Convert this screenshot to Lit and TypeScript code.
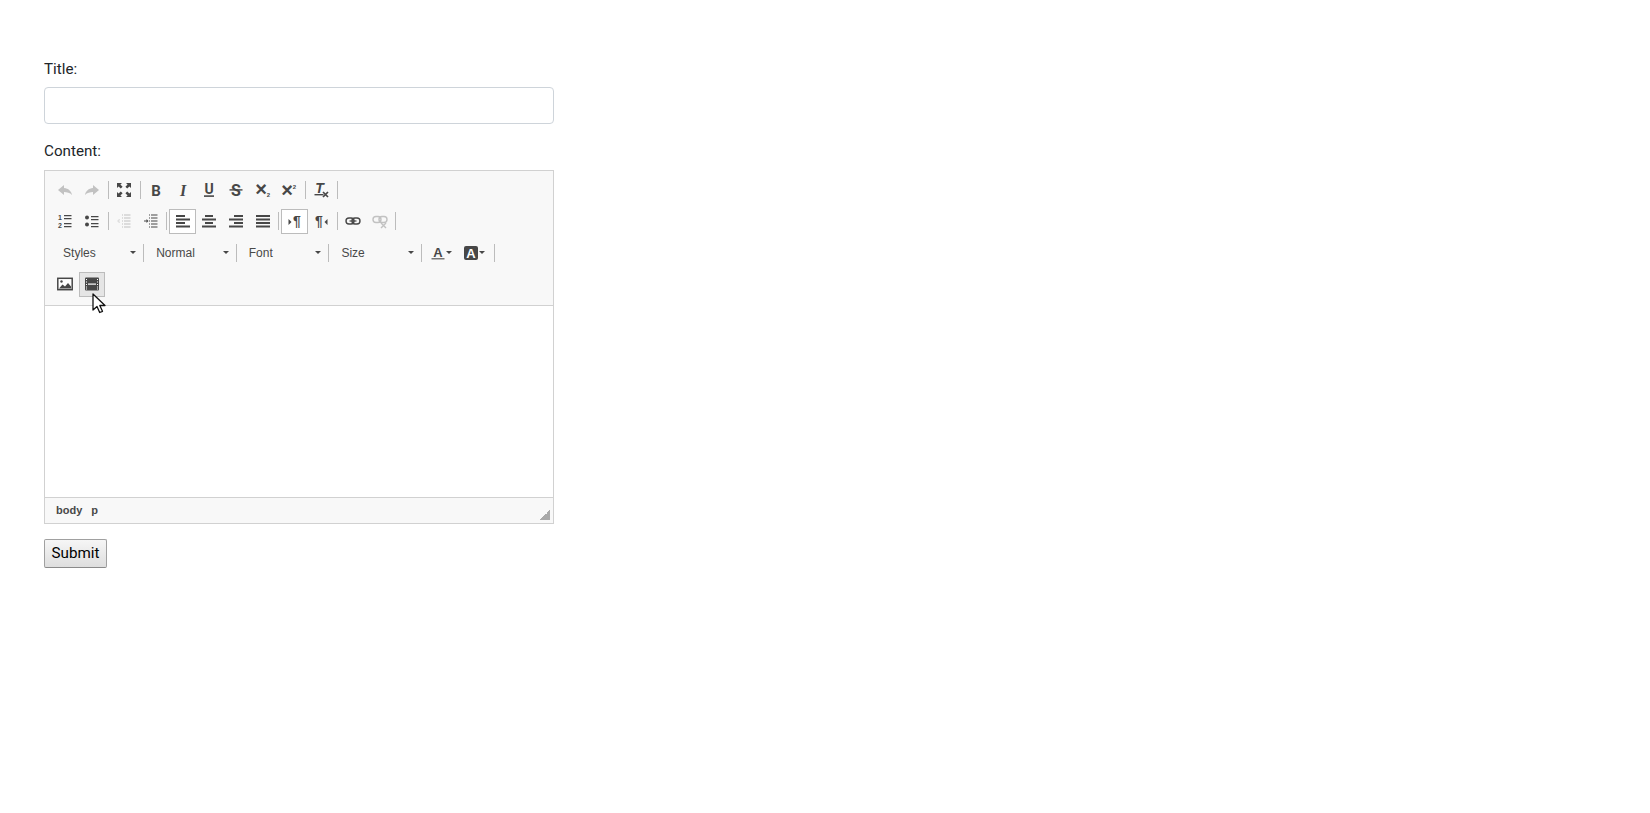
import { LitElement, html, css, svg, TemplateResult } from "lit";
import { customElement } from "lit/decorators.js";

const label = (t: string, size: number, family: string, x: number, y: number, style = "") =>
  svg`<text x=${x} y=${y} font-size=${size} font-family=${family} font-weight="bold" font-style=${style || "normal"} text-anchor="middle">${t}</text>`;
const SANS = "Liberation Sans, sans-serif";
const SERIF = "Liberation Serif, serif";
const DOTS = svg`<path d="M6 1.500h1v1H6zM6 4.500h1v1H6zM6 7.500h1v1H6zM6 10.500h1v1H6zM6 13.500h1v1H6z"/>`;
const LINES = svg`<path d="M8 1.500h6.500v1.100H8zM8 4.500h6.500v1.100H8zM8 7.500h6.500v1.100H8zM8 10.500h6.500v1.100H8zM8 13.500h6.500v1.100H8z"/>`;

const ICONS: Record<string, TemplateResult> = {
  undo: svg`<path d="M7 3 1 8l6 5v-3c3 0 6 .8 8 3-.7-4-3.500-6.600-8-7z"/>`,
  redo: svg`<path d="M9 3l6 5-6 5v-3c-3 0-6 .8-8 3 .7-4 3.500-6.600 8-7z"/>`,
  maximize: svg`<path d="M1 1h5L4.400 2.600 6.600 4.800 4.800 6.600 2.600 4.400 1 6zM15 1v5l-1.600-1.600-2.200 2.200-1.800-1.800 2.200-2.200L10 1zM1 15v-5l1.600 1.600 2.200-2.200 1.800 1.800-2.200 2.200L6 15zM15 15h-5l1.600-1.600-2.200-2.200 1.800-1.800 2.200 2.200L15 10z"/>`,
  bold: svg`${label("B", 15, "Roboto, sans-serif", 8, 13.500)}`,
  italic: svg`${label("I", 16, SERIF, 8, 13.500, "italic")}`,
  underline: svg`${label("U", 14, "Roboto, sans-serif", 8, 12)}<rect x="3" y="13.300" width="10" height="1.600"/>`,
  strike: svg`${label("S", 16, "Roboto, sans-serif", 8, 13.800)}<rect x="1.500" y="7.200" width="13" height="1.400"/>`,
  sub: svg`${label("×", 20, SANS, 6, 13.500)}${label("2", 6, SANS, 13.500, 14.500)}`,
  sup: svg`${label("×", 20, SANS, 6, 15)}${label("2", 6, SANS, 13.500, 6.500)}`,
  clear: svg`${label("T", 14, SANS, 6.500, 10.500, "italic")}<rect x="1.500" y="12" width="9" height="1.400"/><path d="M10 10l5 5M15 10l-5 5" stroke="#474747" stroke-width="1.700" fill="none"/>`,
  ol: svg`${label("1", 7, SANS, 3, 7)}${label("2", 7, SANS, 3, 14.500)}<path d="M7 2h7.500v1.300H7zM7 5h7.500v1.300H7zM7 10h7.500v1.300H7zM7 13h7.500v1.300H7z"/>`,
  ul: svg`<circle cx="3" cy="4.500" r="2"/><circle cx="3" cy="11.500" r="2"/><path d="M7 3h7.500v1.300H7zM7 6h7.500v1.300H7zM7 10h7.500v1.300H7zM7 13h7.500v1.300H7z"/>`,
  outdent: svg`${LINES}${DOTS}<path d="M1 7.400h2.500V6l-2.500 2 2.500 2V8.600H1z"/>`,
  indent: svg`${LINES}${DOTS}<path d="M1 7.400h2.500V6l2 2-2 2V8.600H1z"/>`,
  left: svg`<path d="M1 2h9v2H1zM1 5.500h14v2H1zM1 9h9v2H1zM1 12.500h14v2H1z"/>`,
  center: svg`<path d="M4 2h8v2H4zM1 5.500h14v2H1zM4 9h8v2H4zM1 12.500h14v2H1z"/>`,
  right: svg`<path d="M6 2h9v2H6zM1 5.500h14v2H1zM6 9h9v2H6zM1 12.500h14v2H1z"/>`,
  justify: svg`<path d="M1 2h14v2H1zM1 5.500h14v2H1zM1 9h14v2H1zM1 12.500h14v2H1z"/>`,
  ltr: svg`<path d="M1.500 6l3 3-3 3z"/>${label("¶", 14, SANS, 10, 13)}`,
  rtl: svg`${label("¶", 14, SANS, 6, 13)}<path d="M14.500 6l-3 3 3 3z"/>`,
  link: svg`<g fill="none" stroke="#474747" stroke-width="1.400"><rect x="1" y="5" width="8" height="6" rx="3"/><rect x="7" y="5" width="8" height="6" rx="3"/></g><rect x="4.500" y="7.400" width="7" height="1.200"/>`,
  unlink: svg`<g fill="none" stroke="#474747" stroke-width="1.400"><rect x="1" y="3.500" width="8" height="6" rx="3"/><rect x="7" y="3.500" width="8" height="6" rx="3"/><path d="M9 10l5 5M14 10l-5 5"/></g>`,
  color: svg`${label("A", 13, SANS, 8, 11.500)}<rect x="1.500" y="13" width="13" height="1.500" fill="#777"/>`,
  bg: svg`<rect x="1" y="1" width="14" height="14" rx="2"/><text x="8" y="13" font-size="13" font-family=${SANS} font-weight="bold" text-anchor="middle" fill="#fff">A</text>`,
  image: svg`<rect x=".8" y="2.300" width="14.400" height="11.400" fill="#fff" stroke="#474747" stroke-width="1.500"/><path d="M2 12.500l3.500-4 2.500 2 3-3.500 3 3.500v2z"/><circle cx="4.500" cy="5.500" r="1.200"/>`,
  media: svg`<rect x="1" y="1.500" width="14" height="13" rx="1"/><path d="M4 7.500h8v1.200H4z" fill="#fff"/><path d="M2 3h1v1H2zM2 5.500h1v1H2zM2 8h1v1H2zM2 10.500h1v1H2zM2 12.500h1v1H2zM13 3h1v1h-1zM13 5.500h1v1h-1zM13 8h1v1h-1zM13 10.500h1v1h-1zM13 12.500h1v1h-1z" fill="#fff"/>`,
};

type Item = string | { combo: string } | { drop: string };

const ROWS: Item[][] = [
  ["undo:off", "redo:off", "|", "maximize", "|", "bold", "italic", "underline", "strike", "sub", "sup", "|", "clear", "|"],
  ["ol", "ul", "|", "outdent:off", "indent", "|", "left:on", "center", "right", "justify", "|", "ltr:on", "rtl", "|", "link", "unlink:off", "|"],
  [{ combo: "Styles" }, "|", { combo: "Normal" }, "|", { combo: "Font" }, "|", { combo: "Size" }, "|", { drop: "color" }, { drop: "bg" }, "|"],
  ["image", "media:hover"],
];

@customElement("app-root")
export class AppRoot extends LitElement {
  static styles = css`
    :host { display: block; font-family: Roboto, sans-serif; color: #212529; }
    .form { width: 510px; margin-left: 44px; padding-top: 58.300px; position: relative; }
    .lbl { display: block; font-size: 15.200px; line-height: 22.800px; margin-bottom: 6.200px; }
    .input { box-sizing: border-box; display: block; width: 100%; height: 36.500px; border: 1px solid #ced4da; border-radius: 4px; background: #fff; margin-bottom: 16.500px; }
    .editor { box-sizing: border-box; height: 354px; margin-top: 6.900px; border: 1px solid #d1d1d1; display: flex; flex-direction: column; margin-bottom: 15px; }
    .toolbar { background: #f8f8f8; border-bottom: 1px solid #d1d1d1; padding: 3px 7.100px 5px; }
    .row { display: flex; align-items: center; height: 31.500px; }
    .btn { box-sizing: border-box; width: 26.670px; height: 25px; display: flex; align-items: center; justify-content: center; border: 1px solid transparent; }
    .btn svg { width: 16px; height: 16px; fill: #474747; display: block; overflow: visible; }
    .off svg { opacity: .3; }
    .on { background: #fff; border-color: #bcbcbc; }
    .hover { background: #e5e5e5; border-color: #bcbcbc; }
    .sep { width: 5.330px; height: 18px; display: flex; justify-content: center; flex: none; }
    .sep::before { content: ""; width: 1px; background: #bcbcbc; }
    .combo + .sep { width: 3.330px; }
    .drop + .sep { margin-left: 1.500px; }
    .combo { box-sizing: border-box; width: 89.270px; height: 25px; display: flex; align-items: center; padding: 0 5.700px 0 11px; font: 12px "Liberation Sans", sans-serif; color: #484848; }
    .combo:first-child { width: 89.770px; }
    .combo span { flex: 1; }
    .arrow { width: 0; height: 0; border: 3px solid transparent; border-top-color: #474747; border-bottom-width: 0; flex: none; }
    .drop { box-sizing: border-box; width: 33.500px; height: 25px; display: flex; align-items: center; padding-left: 7px; }
    .drop svg { width: 16px; height: 16px; fill: #474747; display: block; }
    .body { flex: 1; background: #fff; }
    .footer { height: 25px; background: #f8f8f8; border-top: 1px solid #d1d1d1; display: flex; align-items: center; gap: 9px; padding: 0 3px 0 11px; font: bold 11px "Liberation Sans", sans-serif; color: #484848; }
    .grip { margin-left: auto; margin-top: 9px; width: 10px; height: 10px; background: linear-gradient(135deg, transparent 50%, #a9a9a9 50%); }
    .submit { display: block; box-sizing: border-box; width: 63px; height: 29px; padding: 0; border: 1px solid #a0a0a0; border-bottom-color: #8a8a8a; border-radius: 2px; background: linear-gradient(#f6f6f6, #dedede); font: 15.200px Roboto, sans-serif; color: #000; }
    .cursor { position: absolute; left: 48px; top: 293px; width: 14px; height: 21px; }
  `;

  private item(it: Item) {
    if (typeof it === "string") {
      if (it === "|") return html`<div class="sep"></div>`;
      const [name, state] = it.split(":");
      return html`<div class="btn ${state ?? ""}"><svg viewBox="0 0 16 16">${ICONS[name]}</svg></div>`;
    }
    if ("combo" in it) return html`<div class="combo"><span>${it.combo}</span><i class="arrow"></i></div>`;
    return html`<div class="drop"><svg viewBox="0 0 16 16">${ICONS[it.drop]}</svg><i class="arrow"></i></div>`;
  }

  render() {
    return html`
      <div class="form">
        <label class="lbl">Title:</label>
        <div class="input"></div>
        <label class="lbl">Content:</label>
        <div class="editor">
          <div class="toolbar">
            ${ROWS.map((r) => html`<div class="row">${r.map((i) => this.item(i))}</div>`)}
          </div>
          <div class="body"></div>
          <div class="footer"><span>body</span><span>p</span><i class="grip"></i></div>
        </div>
        <button class="submit">Submit</button>
        <svg class="cursor" viewBox="0 0 14 21">
          <path d="M1 1v16l4-3.500 2.700 6 2.800-1.200-2.700-5.800H13z" fill="#fff" stroke="#111" stroke-width="1.300" stroke-linejoin="round"/>
        </svg>
      </div>
    `;
  }
}
